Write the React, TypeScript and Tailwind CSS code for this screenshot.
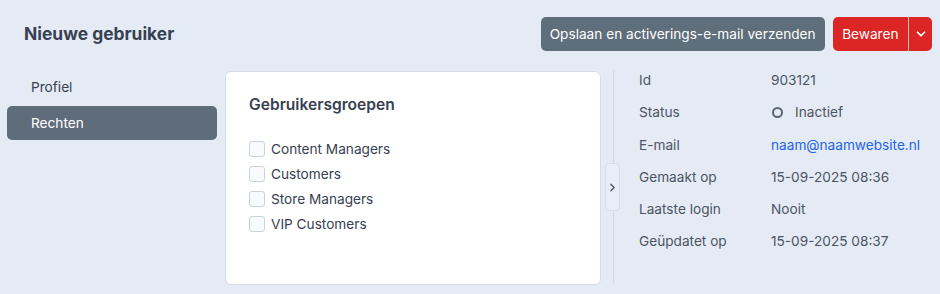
import { ChevronDown, ChevronRight } from 'lucide-react'

const groups = ['Content Managers', 'Customers', 'Store Managers', 'VIP Customers']

const details: { label: string; value: string; kind?: 'status' | 'link' }[] = [
  { label: 'Id', value: '903121' },
  { label: 'Status', value: 'Inactief', kind: 'status' },
  { label: 'E-mail', value: 'naam@naamwebsite.nl', kind: 'link' },
  { label: 'Gemaakt op', value: '15-09-2025 08:36' },
  { label: 'Laatste login', value: 'Nooit' },
  { label: 'Geüpdatet op', value: '15-09-2025 08:37' },
]

export default function App() {
  return (
    <div className="h-[294px] w-[940px] overflow-hidden bg-[#e4ebf5] font-['Inter',sans-serif] text-[13.65px] text-[#374151]">
      {/* header */}
      <div className="flex h-[70px] items-center justify-between pb-[2px] pl-6 pr-2">
        <h1 className="text-[17.4px] font-bold text-[#374151]">Nieuwe gebruiker</h1>
        <div className="flex items-center gap-2">
          <button className="h-[34px] rounded-[5px] bg-[#5f6e7b] px-[9px] text-white">
            Opslaan en activerings-e-mail verzenden
          </button>
          <div className="flex h-[34px] overflow-hidden rounded-[5px] bg-[#dc2626] text-white">
            <button className="px-[9.5px]">Bewaren</button>
            <div className="w-px bg-[#f3b4b4]" />
            <button className="flex w-[23px] items-center justify-center">
              <ChevronDown className="h-[14px] w-[14px]" strokeWidth={3} />
            </button>
          </div>
        </div>
      </div>

      {/* body */}
      <div className="flex pl-[7px]">
        <nav className="flex w-[210px] flex-col gap-[2px]">
          <div className="flex h-[34px] items-center px-6 text-[#374151]">Profiel</div>
          <div className="flex h-[34px] items-center rounded-[5px] bg-[#5f6d7a] px-6 text-white">Rechten</div>
        </nav>

        <div className="ml-2 mt-px h-[214px] w-[376px] rounded-[6px] border border-[#d5dde8] bg-white px-[23px] pt-[21px]">
          <h2 className="text-[15.6px] font-semibold text-[#374151]">Gebruikersgroepen</h2>
          <div className="mt-[20px] flex flex-col">
            {groups.map((g) => (
              <label key={g} className="flex h-[25px] items-center gap-[6px] text-[#374151]">
                <span className="h-[16px] w-[16px] rounded-[3px] border border-[#c9d2de] bg-[#f8fafc]" />
                {g}
              </label>
            ))}
          </div>
        </div>

        <div className="relative ml-[4px] h-[214px] w-[16px]">
          <div className="absolute left-[8px] top-0 h-full w-px bg-[#d2dae5]" />
          <button className="relative mt-[93px] flex h-[48px] w-[15px] items-center justify-center rounded-[4px] border border-[#d5dde8] bg-[#e8eef7]">
            <ChevronRight className="h-[13px] w-[13px] text-[#4b5563]" strokeWidth={2.5} />
          </button>
        </div>

        <div className="ml-[18px] flex flex-col">
          {details.map((d) => (
            <div key={d.label} className="flex h-[32.3px] items-start">
              <div className="w-[132px] text-[#4b5563]">{d.label}</div>
              {d.kind === 'status' ? (
                <div className="flex items-center gap-[12px] text-[#4b5563]">
                  <span className="ml-px h-[11px] w-[11px] rounded-full border-[2px] border-[#5b6673]" />
                  {d.value}
                </div>
              ) : d.kind === 'link' ? (
                <span className="text-[#2563eb]">{d.value}</span>
              ) : (
                <span className="text-[#4b5563]">{d.value}</span>
              )}
            </div>
          ))}
        </div>
      </div>
    </div>
  )
}
